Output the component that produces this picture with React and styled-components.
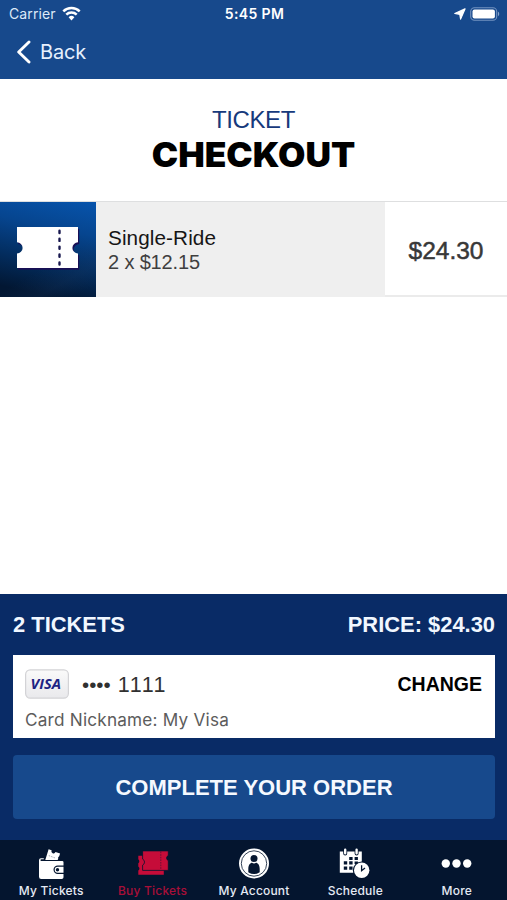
import React from 'react';
import styled, { createGlobalStyle } from 'styled-components';

const GlobalStyle = createGlobalStyle`
  * {
    box-sizing: border-box;
  }
  body {
    margin: 0;
    background: #fff;
    font-family: "Liberation Sans", Arial, sans-serif;
  }
  svg {
    display: block;
  }
`;

const Screen = styled.div`
  display: flex;
  flex-direction: column;
  width: 507px;
  height: 900px;
  overflow: hidden;
`;

const Header = styled.header`
  height: 79px;
  background: #17498c;
  color: #fff;
  font-family: Inter, sans-serif;
`;

const StatusBar = styled.div`
  display: grid;
  grid-template-columns: 1fr auto 1fr;
  align-items: center;
  height: 27px;
  padding: 0 7px 0 9px;
`;

const StatusGroup = styled.div`
  display: flex;
  align-items: center;
  justify-content: ${(p) => (p.$end ? 'flex-end' : 'flex-start')};
  gap: ${(p) => (p.$end ? '4px' : '6px')};
`;

const Carrier = styled.span`
  font-size: 14px;
  letter-spacing: 0.1px;
  color: #dde9f8;
`;

const Time = styled.span`
  font-size: 14px;
  font-weight: 600;
  letter-spacing: 0.35px;
`;

const BackButton = styled.button`
  display: flex;
  align-items: center;
  gap: 9px;
  height: 50px;
  padding: 0 0 0 16px;
  border: none;
  background: none;
  color: #e6f0fd;
  font-family: inherit;
  font-size: 20px;
  letter-spacing: -0.2px;
`;

const TitleBlock = styled.div`
  height: 122px;
  padding-top: 27px;
  text-align: center;
`;

const Kicker = styled.div`
  font-size: 24px;
  line-height: 28px;
  letter-spacing: -0.4px;
  color: #173a7c;
`;

const Title = styled.h1`
  margin: 0;
  font-family: Inter, sans-serif;
  font-size: 34px;
  font-weight: 900;
  line-height: 42px;
  color: #000;
  transform: scaleX(1.04);
`;

const TicketRow = styled.div`
  display: grid;
  grid-template-columns: 96px 289px 1fr;
  height: 96px;
  border-top: 1px solid #dedfe0;
  border-bottom: 2px solid #ebebeb;
`;

const Thumb = styled.div`
  height: 95px;
  padding: 25px 0 0 16px;
  background:
    linear-gradient(150deg, transparent 60%, rgba(30, 60, 100, 0.18) 78%, transparent 92%),
    linear-gradient(192deg, #0754ac 0%, #06458f 30%, #032e61 60%, #021733 90%);
`;

const TicketInfo = styled.div`
  display: flex;
  flex-direction: column;
  justify-content: center;
  height: 95px;
  padding-left: 12px;
  background: #efefef;
`;

const TicketName = styled.div`
  font-size: 20.7px;
  line-height: 24px;
  letter-spacing: 0.1px;
  color: #161616;
`;

const TicketQty = styled.div`
  font-size: 20px;
  line-height: 24px;
  letter-spacing: -0.15px;
  color: #3f3f3f;
`;

const TicketPrice = styled.div`
  display: flex;
  align-items: center;
  justify-content: center;
  padding-top: 2px;
  font-size: 24.5px;
  color: #383838;
  -webkit-text-stroke: 0.5px #383838;
`;

const Summary = styled.section`
  margin-top: auto;
  height: 246px;
  padding: 0 12px 0 13px;
  background: #092b66;
`;

const Totals = styled.div`
  display: flex;
  align-items: center;
  justify-content: space-between;
  height: 61px;
  padding-top: 1px;
  font-size: 21.9px;
  font-weight: 700;
  color: #f1f7ff;
`;

const CardBox = styled.div`
  height: 83px;
  padding: 13px 13px 0 12px;
  background: #fff;
`;

const CardLine = styled.div`
  display: flex;
  align-items: center;
  height: 31px;
`;

const CardNumber = styled.span`
  display: flex;
  align-items: center;
  gap: 7px;
  margin-left: 13px;
  padding-top: 3px;
  font-size: 21.5px;
  font-kerning: none;
  color: #303030;
`;

const Dots = styled.span`
  font-size: 20.5px;
`;

const ChangeButton = styled.button`
  margin-left: auto;
  padding: 2px 0 0;
  border: none;
  background: none;
  font-family: inherit;
  font-size: 19.5px;
  font-weight: 700;
  color: #000;
`;

const Nickname = styled.div`
  margin-top: 10px;
  font-family: Inter, sans-serif;
  font-size: 17.2px;
  line-height: 22px;
  letter-spacing: 0.2px;
  color: #5c5c5c;
`;

const OrderButton = styled.button`
  width: 100%;
  height: 64px;
  margin-top: 17px;
  padding: 1px 0 0;
  border: none;
  border-radius: 4px;
  background: #17498c;
  color: #f5f9ff;
  font-family: inherit;
  font-size: 22px;
  font-weight: 700;
`;

const TabBar = styled.nav`
  display: grid;
  grid-template-columns: repeat(5, 1fr);
  height: 60px;
  background: #04152f;
`;

const Tab = styled.div`
  display: flex;
  flex-direction: column;
  align-items: center;
  padding: 8px 0 0 1px;
`;

const TabLabel = styled.span`
  margin-top: 3px;
  font-family: Inter, sans-serif;
  font-size: 12px;
  font-weight: 500;
  line-height: 16px;
  letter-spacing: 0.2px;
  white-space: nowrap;
  color: ${(p) => (p.$active ? '#a80f38' : '#e4eaf4')};
`;

const WifiIcon = () => (
  <svg width="19" height="15" viewBox="0 0 19 15" fill="none" stroke="#fff" strokeWidth="2.5">
    <path d="M1.3 5.3a11.7 11.7 0 0 1 16.4 0" />
    <path d="M4.3 8.6a7.4 7.4 0 0 1 10.4 0" />
    <path d="M9.5 14.4 6.6 11.3a4.1 4.1 0 0 1 5.8 0z" fill="#fff" stroke="none" />
  </svg>
);

const LocationIcon = () => (
  <svg width="12" height="12" viewBox="0 0 12 12">
    <path d="M11 .9.8 5.5l5 .8.8 4.800z" fill="#fff" stroke="#fff" strokeWidth="1.2" strokeLinejoin="round" />
  </svg>
);

const BatteryIcon = () => (
  <svg width="30" height="14" viewBox="0 0 30 14">
    <rect x=".7" y=".7" width="26" height="12.6" rx="3.8" fill="none" stroke="#7393c0" strokeWidth="1.1" />
    <rect x="2.5" y="2.4" width="22.4" height="9.2" rx="2" fill="#fff" />
    <path d="M28 4.8c1.6.6 1.6 3.8 0 4.4z" fill="#86a3ca" />
  </svg>
);

const ChevronIcon = () => (
  <svg width="15" height="24" viewBox="0 0 15 24" fill="none">
    <path d="M13 2 2.7 12 13 22" stroke="#fff" strokeWidth="2.9" strokeLinecap="round" strokeLinejoin="round" />
  </svg>
);

const ticketShape = 'M1 0h61v15.3a5.6 5.6 0 0 0 0 11.2V41H1V26.5a5.6 5.6 0 0 0 0-11.2z';

const TicketIcon = () => (
  <svg width="66" height="45" viewBox="0 0 66 45">
    <path d={ticketShape} transform="translate(1.2 1.7)" fill="#180f55" />
    <path d={ticketShape} fill="#fff" />
    <path d="M43.5 3.8V39" stroke="#18184f" strokeWidth="2.4" strokeDasharray="2.2 5.700" strokeLinecap="round" />
  </svg>
);

const VisaBadge = () => (
  <svg width="44" height="30" viewBox="0 0 44 30">
    <defs>
      <linearGradient id="visa" x1="0" y1="0" x2="0" y2="1">
        <stop offset="0" stopColor="#fafafa" />
        <stop offset="1" stopColor="#e9e9ec" />
      </linearGradient>
    </defs>
    <rect x=".6" y=".8" width="42.8" height="28.4" rx="4.6" fill="url(#visa)" stroke="#d3d3d6" strokeWidth="1.2" />
    <text
      x="5.5"
      y="19.8"
      textLength="30.5"
      lengthAdjust="spacingAndGlyphs"
      fontFamily="Open Sans, sans-serif"
      fontSize="15"
      fontWeight="700"
      fontStyle="italic"
      fill="#1d2383"
    >
      VISA
    </text>
  </svg>
);

const WalletIcon = () => (
  <svg width="30" height="32" viewBox="0 0 30 32">
    <path d="M9.3 12 12.600 1.300l3 1a2 2 0 0 0 3.900 1.800l4.600 1.500-.9 2.600a2 2 0 0 0-1 2.400l-.5 1.400z" fill="#fff" />
    <path d="m12.800 7.600 7 2.600" stroke="#04152f" strokeWidth=".5" strokeDasharray="1.500 1" opacity=".7" />
    <path d="M5 12.900h21.200q1.300 0 1.300 1.300v3.300h-5.800a4.200 4.200 0 0 0 0 8.400h5.800v3.300q0 1.800-1.800 1.800H5.200q-2.200 0-2.200-2.200V12.200q0-1.900 2-2h2.800v1H5.400q-1 0-1 .8t.6.900z" fill="#fff" />
    <path d="M27.500 18.700h-5.800a3 3 0 0 0 0 6h5.800z" fill="#fff" />
    <circle cx="21.500" cy="21.700" r="1.700" fill="#04152f" />
  </svg>
);

const BuyTicketsIcon = () => (
  <svg width="32" height="32" viewBox="0 0 32 32" fill="#c60c39">
    <path d="M1.300 7.800H8v13.500h18.800v5.500H1.300v-4.200a2.500 2.500 0 0 0 0-4.200v-3.200a2.500 2.500 0 0 0 0-4z" />
    <path
      d="M5.600 2.900h25.700v4.700a2.600 2.600 0 0 0 0 4.900v9.900H5.600v-5.300a3.300 3.300 0 0 0 0-6z"
      stroke="#04152f"
      strokeWidth=".8"
    />
    <path d="M23.800 3.600v18.200" stroke="#04152f" strokeWidth=".8" strokeDasharray="1.600 1" opacity=".6" />
  </svg>
);

const AccountIcon = () => (
  <svg width="32" height="32" viewBox="0 0 32 32">
    <circle cx="16" cy="15.500" r="15" fill="#fff" />
    <circle cx="16" cy="15.500" r="12.700" fill="none" stroke="#04152f" strokeWidth=".8" />
    <circle cx="16" cy="10.500" r="3.500" fill="#04152f" />
    <path d="M10.300 24.200v-3.400c0-3.800 2-6 3.700-6 1.200 1 2.800 1 4 0 1.700 0 3.700 2.200 3.700 6v3.400a10.500 10.500 0 0 1-11.400 0z" fill="#04152f" />
  </svg>
);

const ScheduleIcon = () => (
  <svg width="32" height="32" viewBox="0 0 32 32">
    <path d="M.8 3.600h22v11.400a8 8 0 0 0-8.300 9.800H.8z" fill="#fff" />
    <path
      d="M4.800 13.200h3.400v3.300H4.800zM10.200 13.200h3.400v3.300h-3.400zM15.600 8.900h3.300v3.200h-3.300zM10.200 8.900h3.400v3.200h-3.400zM15.600 13.400h3.300v2.600h-3.300zM4.800 18.500h3.400v3.300H4.800zM10.200 18.500h3.400v3.300h-3.400z"
      fill="#04152f"
    />
    <g stroke="#04152f" strokeWidth="4" strokeLinecap="round">
      <path d="M6.200 2.500v3M17.600 2.500v3" />
    </g>
    <g stroke="#fff" strokeWidth="2.400" strokeLinecap="round">
      <path d="M6.200 1.700v3.600M17.600 1.700v3.600" />
    </g>
    <circle cx="22.700" cy="22.300" r="8.800" fill="#04152f" />
    <circle cx="22.700" cy="22.300" r="7.700" fill="#fff" />
    <path d="M22.600 17.300v5.400l3.400-2.700" fill="none" stroke="#04152f" strokeWidth="1.300" />
  </svg>
);

const MoreIcon = () => (
  <svg width="32" height="32" viewBox="0 0 32 32" fill="#fff">
    <circle cx="4.800" cy="15.500" r="4.200" />
    <circle cx="15.500" cy="15.500" r="4.200" />
    <circle cx="26.200" cy="15.500" r="4.200" />
  </svg>
);

const tabs = [
  { label: 'My Tickets', icon: <WalletIcon /> },
  { label: 'Buy Tickets', icon: <BuyTicketsIcon />, active: true },
  { label: 'My Account', icon: <AccountIcon /> },
  { label: 'Schedule', icon: <ScheduleIcon /> },
  { label: 'More', icon: <MoreIcon /> },
];

const App = () => {
  return (
    <>
      <GlobalStyle />
      <Screen>
        <Header>
          <StatusBar>
            <StatusGroup>
              <Carrier>Carrier</Carrier>
              <WifiIcon />
            </StatusGroup>
            <Time>5:45 PM</Time>
            <StatusGroup $end>
              <LocationIcon />
              <BatteryIcon />
            </StatusGroup>
          </StatusBar>
          <BackButton>
            <ChevronIcon />
            Back
          </BackButton>
        </Header>

        <TitleBlock>
          <Kicker>TICKET</Kicker>
          <Title>CHECKOUT</Title>
        </TitleBlock>

        <TicketRow>
          <Thumb>
            <TicketIcon />
          </Thumb>
          <TicketInfo>
            <TicketName>Single-Ride</TicketName>
            <TicketQty>2 x $12.15</TicketQty>
          </TicketInfo>
          <TicketPrice>$24.30</TicketPrice>
        </TicketRow>

        <Summary>
          <Totals>
            <span>2 TICKETS</span>
            <span>PRICE: $24.30</span>
          </Totals>
          <CardBox>
            <CardLine>
              <VisaBadge />
              <CardNumber>
                <Dots>••••</Dots>
                <span>1111</span>
              </CardNumber>
              <ChangeButton>CHANGE</ChangeButton>
            </CardLine>
            <Nickname>Card Nickname: My Visa</Nickname>
          </CardBox>
          <OrderButton>COMPLETE YOUR ORDER</OrderButton>
        </Summary>

        <TabBar>
          {tabs.map((tab) => (
            <Tab key={tab.label}>
              {tab.icon}
              <TabLabel $active={tab.active}>{tab.label}</TabLabel>
            </Tab>
          ))}
        </TabBar>
      </Screen>
    </>
  );
};

export default App;
